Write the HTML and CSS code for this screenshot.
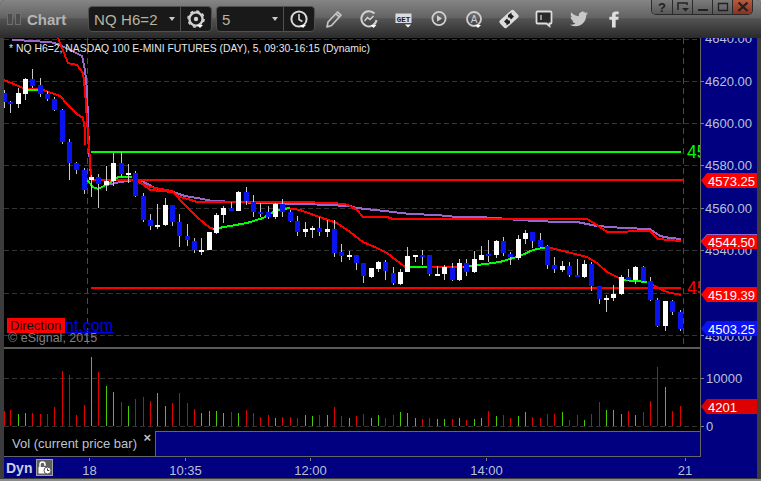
FILE: index.html
```html
<!DOCTYPE html>
<html lang="en">
<head>
<meta charset="utf-8">
<title>Chart</title>
<link rel="stylesheet" href="styles.css">
</head>
<body>
<div class="window">
  <header class="toolbar">
    <span class="grip"><i></i><i></i></span>
    <span class="app-title">Chart</span>
    <div class="combo combo-symbol">
      <span class="combo-text">NQ H6=2</span><span class="caret"></span>
      <span class="combo-btn">
        <svg width="20" height="20" viewBox="0 0 20 20"><circle cx="10" cy="10" r="6.6" fill="none" stroke="#d0d0d0" stroke-width="2.4"/><circle cx="10" cy="10" r="8" fill="none" stroke="#d0d0d0" stroke-width="1.6" stroke-dasharray="3 3.3"/><circle cx="10" cy="10" r="2.2" fill="#d0d0d0"/><path d="M11 16h6l-3 3z" fill="#fff"/></svg>
      </span>
    </div>
    <div class="combo combo-interval">
      <span class="combo-text">5</span><span class="caret"></span>
      <span class="combo-btn">
        <svg width="20" height="20" viewBox="0 0 20 20"><circle cx="10" cy="10" r="7.6" fill="none" stroke="#d8d8d8" stroke-width="2"/><path d="M10 5v5.5l3.4 2" fill="none" stroke="#d8d8d8" stroke-width="1.6"/><path d="M11 16h6l-3 3z" fill="#fff"/></svg>
      </span>
    </div>
    <div class="tools">
      <span class="tool"><svg width="20" height="20" viewBox="0 0 20 20"><path d="M3 18l1-5L13.500 3l3.500 3.200L7.500 16.500z M12 4.800l3.500 3.200" fill="none" stroke="#c4c4c4" stroke-width="1.700" stroke-linejoin="round"/></svg></span>
      <span class="tool"><svg width="20" height="20" viewBox="0 0 20 20"><path d="M15.500 4.500A7.600 7.600 0 1 0 17.500 11" fill="none" stroke="#d0d0d0" stroke-width="2"/><path d="M5.500 12l3-3.500 2.500 2 3.500-3.500" fill="none" stroke="#d0d0d0" stroke-width="1.500"/><path d="M11.500 16h6l-3 3z" fill="#fff"/></svg></span>
      <span class="tool"><svg width="20" height="20" viewBox="0 0 20 20"><rect x="1.500" y="4.500" width="16" height="9.500" fill="#dcdcdc"/><text x="9.500" y="12.500" class="get-text">GET</text><path d="M11 15.500h6l-3 3z" fill="#fff"/></svg></span>
      <span class="tool"><svg width="20" height="20" viewBox="0 0 20 20"><circle cx="10" cy="9.500" r="6.600" fill="none" stroke="#d0d0d0" stroke-width="1.800"/><path d="M8 6.200l5 3.300-5 3.300z" fill="#d0d0d0"/></svg></span>
      <span class="tool"><svg width="20" height="20" viewBox="0 0 20 20"><circle cx="10" cy="10" r="7" fill="none" stroke="#d0d0d0" stroke-width="1.800"/><text x="10" y="13.500" class="a-text">A</text><path d="M11 16h6l-3 3z" fill="#fff"/></svg></span>
      <span class="tool"><svg width="20" height="20" viewBox="0 0 20 20"><rect x="0.500" y="5" width="19" height="10" rx="2" transform="rotate(-42 10 10)" fill="#dcdcdc"/><path d="M9 6l3.500-2.500v1.800L15 7.500l-3 3-1.500-2H9zM11 14l-3.500 2.500v-1.800L5 12.500l3-3 1.500 2H11z" fill="#222"/></svg></span>
      <span class="tool"><svg width="20" height="20" viewBox="0 0 20 20"><path d="M3.500 2.500h13a1 1 0 0 1 1 1v10a1 1 0 0 1-1 1h-1v2.500l-3-2.500H3.500a1 1 0 0 1-1-1v-10a1 1 0 0 1 1-1z" fill="#2a2a2a" stroke="#dcdcdc" stroke-width="1.800"/><path d="M7 6v5" stroke="#dcdcdc" stroke-width="1.200"/></svg></span>
      <span class="tool"><svg width="18" height="18" viewBox="0 0 24 24"><path d="M23.950 4.570a10 10 0 0 1-2.820.77 4.960 4.960 0 0 0 2.160-2.720c-.95.55-2 .96-3.120 1.190a4.920 4.920 0 0 0-8.380 4.480C7.690 8.090 4.070 6.130 1.640 3.160a4.820 4.820 0 0 0-.67 2.480c0 1.710.87 3.210 2.190 4.100a4.900 4.900 0 0 1-2.230-.62v.06a4.920 4.920 0 0 0 3.950 4.830 4.900 4.900 0 0 1-2.210.08 4.940 4.940 0 0 0 4.600 3.420A9.870 9.870 0 0 1 0 19.540a14 14 0 0 0 7.560 2.210c9.050 0 14-7.500 14-13.980 0-.21 0-.42-.02-.63a9.940 9.940 0 0 0 2.460-2.550z" fill="#c8c8c8"/></svg></span>
      <span class="tool"><svg width="16" height="17" viewBox="0 0 24 24"><path d="M9 8H5v4.500h4V24h5.500V12.500h4l.5-4.500h-4.500V5.800c0-1 .3-1.500 1.500-1.500H19V0h-4.300C10.500 0 9 2 9 5z" fill="#dedede"/></svg></span>
    </div>
    <div class="win-controls">
      <span class="win-btn help">?</span>
      <span class="win-btn"><svg width="14" height="12" viewBox="0 0 14 12"><path d="M2 9V2h9v2" fill="none" stroke="#222" stroke-width="1.500"/><path d="M6 7h7l-3.500 3.500z" fill="#222"/></svg></span>
      <span class="win-btn"><svg width="14" height="12" viewBox="0 0 14 12"><rect x="2" y="8" width="10" height="2" fill="#222"/></svg></span>
      <span class="win-btn"><svg width="14" height="12" viewBox="0 0 14 12"><path d="M2.500 2.500h9v7h-9z" fill="none" stroke="#222" stroke-width="1.300"/></svg></span>
      <span class="win-btn close"><svg width="14" height="12" viewBox="0 0 14 12"><path d="M2.500 1.500l9 8.500M11.500 1.500l-9 8.500" stroke="#222" stroke-width="2.400"/></svg></span>
    </div>
  </header>

  <div class="workspace">
    <div class="panes">
      <section class="price-pane">
        <svg class="canvas" width="696" height="309" viewBox="4 38 696 309">
          <path class="grid" d="M4 39.500H700M4 81.500H700M4 123.500H700M4 165.500H700M4 208.500H700M4 250.500H700M4 293.500H700M4 335.500H700"/>
          <path class="vgrid" d="M87.500 38V347M683.500 38V347"/>
          <path class="line purple" d="M12 39.500L30 41 50 42 58 44 70 50 82 56 85 70 87 90 89 150 91 178M103 186L120 182 135 180 140 180 155 188 170 191 185 196 197 198 213 201 260 203 307 204 326 205 350 206 357 208 375 210 393 212 410 214 437 215 457 217 477 217 497 218 518 220 558 222 577 222 597 226 623 228 650 229 660 236 670 238 681 239"/>
          <path class="line red" d="M58 38L68 63 77 65 83 73 85 90 87 120 88.500 140 90 160 91 178 95 180H135L140 182 150 190 172 192 180 197 188 199 197 202 300 202 330 203 345 204 350 206 357 210 363 217H387L393 219H500L587 219 597 225 607 232 650 231 658 239 681 241"/>
          <path class="line red" d="M4 80L23 88 33 89 43 90 60 96 67 104 77 114 83 118 85 130 85 145M135 180L140 183 150 187 172 191 183 203 197 217 210 228 215 229M280 208L287 208 300 210 325 219 337 223 350 232 363 242 377 248 387 253 400 263 405 267M427 267H463M547 247L563 251 587 257 597 263 607 272 617 277 623 280M650 283L660 289 667 292 681 295"/>
          <path class="line green" d="M28 90H38M87 180L93 187 98 189 110 183 118 177 132 177M112 180H135M213 229L230 226 247 223 263 218 277 210 290 208M405 267H427M463 267L477 265 493 263 500 262 520 256 533 250 547 247M623 280L647 282"/>
          <path class="level green-level" d="M91 152H681"/>
          <path class="level red-level" d="M91 180H684M91 288H681"/>
          <path class="wick" d="M4.500 90V108M10.500 101V113M18.500 88V108M25.500 78V100M32.500 69V88M40.500 78V97M47.500 91V101M54.500 97V111M62.500 109V144M69.500 139V180M76.500 162V174M84.500 168V194M91.500 175V197M98.500 174V208M106.500 166V191M113.500 153V186M121.500 152V177M128.500 164V183M135.500 171V197M143.500 193V222M150.500 214V230M157.500 204V229M165.500 198V226M172.500 205V226M179.500 214V247M187.500 224V246M194.500 238V253M201.500 238V255M209.500 232V250M216.500 213V234M223.500 206V223M231.500 202V211M238.500 191V211M246.500 187V205M253.500 195V217M260.500 203V217M268.500 206V219M275.500 203V219M282.500 199V217M290.500 210V222M297.500 216V236M305.500 222V237M312.500 226V238M319.500 217V236M327.500 220V237M334.500 220V257M341.500 244V262M349.500 251V260M356.500 255V270M363.500 263V283M371.500 268V278M378.500 261V272M385.500 260V280M393.500 267V285M400.500 269V285M407.500 247V272M415.500 255V262M422.500 250V265M429.500 255V276M437.500 266V276M444.500 265V280M452.500 263V281M459.500 259V281M466.500 259V276M474.500 251V273M481.500 246V260M488.500 240V262M496.500 240V258M503.500 237V256M510.500 252V265M518.500 235V260M525.500 230V244M532.500 232V248M540.500 233V248M547.500 245V269M554.500 257V273M562.500 261V272M569.500 262V277M577.500 259V277M584.500 260V278M591.500 262V291M599.500 286V304M606.500 295V312M613.500 285V301M621.500 275V295M628.500 269V281M635.500 266V284M643.500 266V282M650.500 277V301M657.500 298V327M665.500 301V331M672.500 300V315M680.500 310V331"/>
          <path class="body up" d="M18.500 93V104M25.500 79V94M91.500 177V180M106.500 181V185M113.500 163V181M128.500 173V175M157.500 225V227M165.500 205V225M201.500 250V252M209.500 232V250M216.500 215V233M223.500 208V215M238.500 192V211M275.500 204V217M305.500 229V232M312.500 228V230M327.500 229V232M349.500 255V257M371.500 268V277M378.500 262V269M400.500 272V284M407.500 256V272M415.500 255V257M437.500 274V276M444.500 267V274M459.500 263V280M474.500 259V272M481.500 255V260M496.500 241V255M518.500 239V258M525.500 233V239M562.500 266V270M584.500 264V277M606.500 298V300M613.500 294V298M621.500 277V294M635.500 267V280M665.500 301V326"/>
          <path class="body down" d="M4.500 93V102M10.500 102V104M32.500 79V86M40.500 85V94M47.500 94V99M54.500 99V110M62.500 110V142M69.500 142V163M76.500 163V170M84.500 170V190M98.500 177V184M121.500 163V174M135.500 173V196M143.500 196V220M150.500 220V226M172.500 205V222M179.500 222V236M187.500 236V240M194.500 241V250M231.500 208V211M246.500 192V201M253.500 202V212M260.500 212V214M268.500 212V217M282.500 204V212M290.500 212V221M297.500 221V232M319.500 228V232M334.500 229V253M341.500 252V256M356.500 255V263M363.500 263V276M385.500 262V271M393.500 273V283M422.500 255V257M429.500 255V274M452.500 268V280M466.500 263V272M488.500 254V256M503.500 241V253M510.500 254V257M532.500 232V241M540.500 240V247M547.500 246V265M554.500 265V269M569.500 266V275M577.500 275V277M591.500 264V286M599.500 286V299M628.500 277V280M643.500 267V281M650.500 281V300M657.500 300V326M672.500 301V312M680.500 312V329"/>
          <text x="687" y="158" class="cut-label cut-green">45</text>
          <text x="687" y="294" class="cut-label cut-red">45</text>
        </svg>
        <p class="study-title">* NQ H6=2, NASDAQ 100 E-MINI FUTURES (DAY), 5, 09:30-16:15 (Dynamic)</p>
        <div class="branding"><span class="badge">Direction</span><span class="site">nt.com</span></div>
        <p class="copyright">© eSignal, 2015</p>
      </section>
      <section class="volume-pane">
        <svg class="canvas" width="696" height="82" viewBox="4 349 696 82">
          <path class="grid" d="M4 378.500H700M4 426.500H700"/>
          <path class="vol-red" d="M4.500 411V426M10.500 410V426M32.500 413V426M40.500 414V426M47.500 414V426M54.500 407V426M62.500 371V426M69.500 375V426M76.500 415V426M84.500 405V426M98.500 372V426M121.500 402V426M135.500 399V426M143.500 397V426M150.500 401V426M172.500 403V426M179.500 393V426M187.500 403V426M194.500 409V426M231.500 412V426M246.500 410V426M253.500 413V426M260.500 417V426M268.500 415V426M282.500 417V426M290.500 417V426M297.500 418V426M319.500 415V426M334.500 407V426M341.500 416V426M356.500 416V426M363.500 414V426M385.500 418V426M393.500 415V426M422.500 419V426M429.500 418V426M452.500 419V426M466.500 420V426M488.500 411V426M503.500 415V426M510.500 418V426M532.500 417V426M540.500 418V426M547.500 414V426M554.500 414V426M569.500 420V426M577.500 415V426M591.500 414V426M599.500 402V426M628.500 411V426M643.500 412V426M650.500 401V426M657.500 367V426M672.500 411V426M680.500 406V426"/>
          <path class="vol-green" d="M18.500 414V426M25.500 413V426M91.500 357V426M106.500 386V426M113.500 392V426M128.500 406V426M157.500 393V426M165.500 406V426M201.500 413V426M209.500 411V426M216.500 411V426M223.500 413V426M238.500 413V426M275.500 418V426M305.500 415V426M312.500 416V426M327.500 415V426M349.500 418V426M371.500 418V426M378.500 415V426M400.500 412V426M407.500 413V426M415.500 418V426M437.500 419V426M444.500 419V426M459.500 418V426M474.500 419V426M481.500 418V426M496.500 416V426M518.500 416V426M525.500 412V426M562.500 412V426M584.500 420V426M606.500 410V426M613.500 410V426M621.500 414V426M635.500 415V426M665.500 387V426"/>
        </svg>
      </section>
      <section class="legend-row">
        <div class="legend"><span>Vol (current price bar)</span><span class="legend-close">×</span></div>
        <div class="legend-fill"></div>
      </section>
    </div>
    <aside class="axis">
      <svg class="canvas" width="56" height="419" viewBox="701 38 56 419">
        <path class="tick" d="M701 81.500H704M701 123.500H704M701 165.500H704M701 208.500H704M701 250.500H704M701 335.500H704M701 378.500H704M701 426.500H704"/>
        <g class="axis-label">
          <text x="705" y="43">4640.00</text>
          <text x="705" y="86">4620.00</text>
          <text x="705" y="128">4600.00</text>
          <text x="705" y="170">4580.00</text>
          <text x="705" y="213">4560.00</text>
          <text x="705" y="255">4540.00</text>
          <text x="705" y="341">4500.00</text>
          <text x="706" y="383">10000</text>
          <text x="706" y="431">0</text>
        </g>
        <path class="flag-purple" d="M701 241L707 234H757V248H707z"/>
        <path class="flag-red" d="M701 180.500L707 173H757V188H707z"/>
        <path class="flag-red" d="M701 242L707 235H757V249H707z"/>
        <path class="flag-red" d="M701 294.500L707 287H757V302H707z"/>
        <path class="flag-blue" d="M701 328.500L707 321H757V336H707z"/>
        <path class="flag-dred" d="M701 406.500L707 399H757V414H707z"/>
        <g class="flag-label">
          <text x="708" y="185.500">4573.25</text>
          <text x="708" y="247">4544.50</text>
          <text x="708" y="299.500">4519.39</text>
          <text x="708" y="333.500">4503.25</text>
          <text x="708" y="411.500">4201</text>
        </g>
      </svg>
    </aside>
  </div>
  <footer class="time-row">
    <span class="dyn">Dyn</span>
    <span class="lock"><svg width="15" height="15" viewBox="0 0 15 15"><path d="M3 7V4.500a2.500 2.500 0 0 1 5 0V6" fill="none" stroke="#fff" stroke-width="1.500"/><rect x="1.500" y="7" width="7.500" height="6.500" fill="#fff"/><circle cx="10.500" cy="10.500" r="3.500" fill="#fff" stroke="#555"/><path d="M10.500 8.500v2h1.800" fill="none" stroke="#333"/></svg></span>
    <svg class="time-axis" width="646" height="21" viewBox="55 456 646 21">
      <path class="tick" d="M91.500 457V460M187.500 457V460M312.500 457V460M488.500 457V460M687.500 457V460"/>
      <g class="axis-label time-label">
        <text x="91.500" y="474">18</text>
        <text x="187.500" y="474">10:35</text>
        <text x="312.500" y="474">12:00</text>
        <text x="488.500" y="474">14:00</text>
        <text x="687" y="474">21</text>
      </g>
    </svg>
  </footer>
</div>
</body>
</html>
```

FILE: styles.css
```css
* { box-sizing: border-box; }
html, body { margin: 0; padding: 0; background: #8a8a8a; }
body { width: 761px; height: 481px; overflow: hidden; font-family: "Liberation Sans", Arial, sans-serif; }
p { margin: 0; }

.window {
  width: 761px;
  height: 479px;
  display: flex;
  flex-direction: column;
  background: #3c3c3c;
  border-radius: 5px 5px 0 0;
  overflow: hidden;
}

.toolbar {
  flex: 0 0 38px;
  display: flex;
  align-items: center;
  padding: 0 8px 0 7px;
  background: linear-gradient(#858585 0, #636363 46%, #525252 50%, #2a2a2a 100%);
}
.grip { display: flex; gap: 2px; width: 20px; }
.grip i { width: 6px; height: 12px; border: 1px solid #6e6e6e; background: #4c4c4c; }
.app-title { width: 61px; font-size: 15px; font-weight: bold; color: #b4b4b4; }

.combo {
  display: flex;
  align-items: center;
  height: 26px;
  background: #191919;
  border: 1px solid #505050;
  border-radius: 4px;
  color: #b8b4a0;
}
.combo-symbol { width: 124px; }
.combo-interval { width: 99px; margin-left: 4px; }
.combo-text { flex: 1; padding-left: 5px; font-size: 15px; letter-spacing: 0.1px; }
.caret { width: 0; height: 0; margin-right: 5px; border: 3.5px solid transparent; border-top: 4px solid #c8c8c8; border-bottom: 0; }
.combo-btn { flex: 0 0 31px; height: 100%; display: flex; align-items: center; justify-content: center; border-left: 1px solid #505050; }

.tools { display: flex; margin-left: 1px; }
.tool { width: 35px; height: 38px; display: flex; align-items: center; justify-content: center; }
.get-text { font: bold 7.5px "Liberation Mono", monospace; fill: #222; text-anchor: middle; }
.a-text { font: 10px "Liberation Sans", sans-serif; fill: #d0d0d0; text-anchor: middle; }

.win-controls {
  display: flex;
  align-self: flex-start;
  margin-left: auto;
  height: 15px;
  border: 1px solid #2a2a2a;
  border-top: 0;
  border-radius: 0 0 5px 5px;
  overflow: hidden;
}
.win-btn {
  width: 20px;
  display: flex;
  align-items: center;
  justify-content: center;
  background: linear-gradient(#7c7c7c, #585858);
  border-left: 1px solid #2a2a2a;
  font-size: 13px;
  font-weight: bold;
  color: #222;
}
.win-btn:first-child { border-left: 0; }
.win-btn.close { background: linear-gradient(#b85a40, #8c3020); }

.workspace { flex: 0 0 419px; display: flex; padding: 0 4px; }
.panes { width: 697px; display: flex; flex-direction: column; border-right: 1px solid #666; background: #000; }
.axis { flex: 0 0 56px; background: #000080; }
.canvas { display: block; overflow: hidden; }

.price-pane { position: relative; height: 309px; background: #000; }
.volume-pane { height: 84px; background: #000; border-top: 2px solid #5a5a5a; }
.legend-row { flex: 1; display: flex; border-bottom: 1px solid #666; }
.legend { width: 151px; display: flex; justify-content: space-between; padding: 0 4px 0 8px; font-size: 13px; line-height: 25px; color: #b8c4d4; background: #000; }
.legend-close { font-size: 13px; font-weight: bold; line-height: 13px; color: #c0c0c0; }
.legend-fill { flex: 1; background: #000080; border-left: 1px solid #666; border-top: 1px solid #666; }

.grid { stroke: #333; stroke-width: 1; stroke-dasharray: 5 3; fill: none; }
.vgrid { stroke: #4a4a4a; stroke-width: 1; stroke-dasharray: 6 4; fill: none; }
.line { fill: none; stroke-width: 2; shape-rendering: crispEdges; }
.purple { stroke: #9966cc; }
.red { stroke: #ff0000; }
.green { stroke: #00ff00; }
.level { fill: none; stroke-width: 2; shape-rendering: crispEdges; }
.green-level { stroke: #00ff00; }
.red-level { stroke: #ff0000; }
.wick { fill: none; stroke: #c8c8c8; stroke-width: 1; shape-rendering: crispEdges; }
.body { fill: none; stroke-width: 5; shape-rendering: crispEdges; }
.up { stroke: #ffffff; }
.down { stroke: #0a14f0; }
.vol-red { fill: none; stroke: #e00000; stroke-width: 1; shape-rendering: crispEdges; }
.vol-green { fill: none; stroke: #44cc00; stroke-width: 1; shape-rendering: crispEdges; }
.cut-label { font-size: 17.500px; }
.cut-green { fill: #00ff00; }
.cut-red { fill: #ff0000; }

.study-title { position: absolute; left: 5px; top: 5px; font-size: 10.400px; line-height: 12px; color: #e8e8e8; white-space: nowrap; }
.branding { position: absolute; left: 3px; top: 280px; display: flex; align-items: flex-start; }
.badge { position: relative; width: 58px; height: 15px; padding-left: 3px; background: #ff0000; color: #111; font-size: 13px; line-height: 15px; }
.site { color: #0000e8; font-size: 16px; line-height: 16px; text-decoration: underline; }
.copyright { position: absolute; left: 4px; top: 293px; font-size: 12.500px; line-height: 14px; color: #808080; }

.tick { stroke: #808080; stroke-width: 1; fill: none; }
.axis-label text { font-size: 13px; fill: #b8c0d8; }
.time-label text { text-anchor: middle; font-size: 13px; }
.flag-label text { font-size: 13px; fill: #ffffff; }
.flag-purple { fill: #9966cc; }
.flag-red { fill: #ff0000; }
.flag-dred { fill: #dd0000; }
.flag-blue { fill: #0a14f0; }

.time-row {
  flex: 0 0 20px;
  display: flex;
  align-items: center;
  margin: 0 4px;
  background: #000080;
}
.dyn { padding-left: 2px; width: 32px; font-size: 14px; font-weight: bold; color: #c8d0e0; }
.lock {
  width: 17px;
  height: 17px;
  display: flex;
  align-items: center;
  justify-content: center;
  background: #606060;
  border: 1px solid #a0a0a0;
}
.time-axis { display: block; }
```
